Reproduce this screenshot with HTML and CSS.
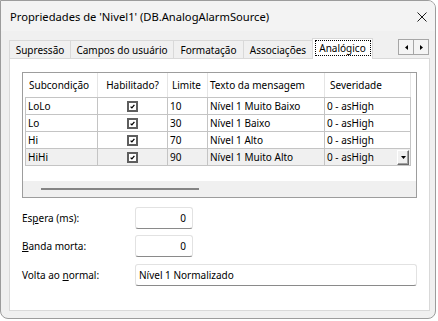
FILE: index.html
```html
<!DOCTYPE html>
<html lang="pt">
<head>
<meta charset="utf-8">
<title>Propriedades</title>
<link rel="stylesheet" href="styles.css">
</head>
<body>
<div class="window">
  <div class="titlebar">
    <span class="title">Propriedades de 'Nivel1' (DB.AnalogAlarmSource)</span>
    <svg class="close" width="10" height="10" viewBox="0 0 10 10"><path d="M0.5 0.5L9.5 9.5M9.5 0.5L0.5 9.5" stroke="#1b1b1b" stroke-width="1" fill="none"/></svg>
  </div>
  <div class="client">
    <div class="tabstrip">
      <div class="tab t1">Supressão</div>
      <div class="tab t2">Campos do usuário</div>
      <div class="tab t3">Formatação</div>
      <div class="tab t4">Associações</div>
      <div class="tab t5 active"><span class="focus">Analógico</span></div>
      <div class="spin">
        <div class="spinbtn"><svg width="3" height="5" viewBox="0 0 3 5"><path d="M3 0V5L0 2.5Z" fill="#000"/></svg></div>
        <div class="spinbtn"><svg width="3" height="5" viewBox="0 0 3 5"><path d="M0 0V5L3 2.5Z" fill="#000"/></svg></div>
      </div>
    </div>
    <div class="panel">
      <div class="grid">
        <div class="ghead">
          <div class="hc c1">Subcondição</div>
          <div class="hc c2">Habilitado?</div>
          <div class="hc c3">Limite</div>
          <div class="hc c4">Texto da mensagem</div>
          <div class="hc c5">Severidade</div>
        </div>
        <div class="gbody">
          <div class="grow">
            <div class="cell">LoLo</div>
            <div class="cell chk"><svg width="11" height="11" viewBox="0 0 11 11"><rect x="1" y="1" width="9" height="9" fill="#fff" stroke="#5e5e5e" stroke-width="2"/><path d="M3.6 5.6L4.9 6.9L7.4 3.9" stroke="#000" stroke-width="1.3" fill="none"/></svg></div>
            <div class="cell">10</div>
            <div class="cell">Nível 1 Muito Baixo</div>
            <div class="cell">0 - asHigh</div>
          </div>
          <div class="grow">
            <div class="cell">Lo</div>
            <div class="cell chk"><svg width="11" height="11" viewBox="0 0 11 11"><rect x="1" y="1" width="9" height="9" fill="#fff" stroke="#5e5e5e" stroke-width="2"/><path d="M3.6 5.6L4.9 6.9L7.4 3.9" stroke="#000" stroke-width="1.3" fill="none"/></svg></div>
            <div class="cell">30</div>
            <div class="cell">Nível 1 Baixo</div>
            <div class="cell">0 - asHigh</div>
          </div>
          <div class="grow">
            <div class="cell">Hi</div>
            <div class="cell chk"><svg width="11" height="11" viewBox="0 0 11 11"><rect x="1" y="1" width="9" height="9" fill="#fff" stroke="#5e5e5e" stroke-width="2"/><path d="M3.6 5.6L4.9 6.9L7.4 3.9" stroke="#000" stroke-width="1.3" fill="none"/></svg></div>
            <div class="cell">70</div>
            <div class="cell">Nível 1 Alto</div>
            <div class="cell">0 - asHigh</div>
          </div>
          <div class="grow current">
            <div class="cell">HiHi</div>
            <div class="cell chk"><svg width="11" height="11" viewBox="0 0 11 11"><rect x="1" y="1" width="9" height="9" fill="#fff" stroke="#5e5e5e" stroke-width="2"/><path d="M3.6 5.6L4.9 6.9L7.4 3.9" stroke="#000" stroke-width="1.3" fill="none"/></svg></div>
            <div class="cell">90</div>
            <div class="cell">Nível 1 Muito Alto</div>
            <div class="cell combo"><span>0 - asHigh</span><span class="dropbtn"><svg width="5" height="3" viewBox="0 0 5 3"><path d="M0 0H5L2.5 3Z" fill="#000"/></svg></span></div>
          </div>
        </div>
        <div class="hscroll"><div class="thumb"></div></div>
      </div>
      <div class="form">
        <div class="frow r1">
          <label class="lbl">Es<u>p</u>era (ms):</label>
          <div class="field num">0</div>
        </div>
        <div class="frow r2">
          <label class="lbl"><u>B</u>anda morta:</label>
          <div class="field num">0</div>
        </div>
        <div class="frow r3">
          <label class="lbl">Volta ao <u>n</u>ormal:</label>
          <div class="field wide">Nível 1 Normalizado</div>
        </div>
      </div>
    </div>
  </div>
</div>
</body>
</html>
```

FILE: styles.css
```css
* { box-sizing: border-box; }
html, body { margin: 0; padding: 0; }
body {
  width: 438px;
  height: 321px;
  overflow: hidden;
  background: #ffffff;
  font-family: "Noto Sans", "Open Sans", sans-serif;
  font-size: 10px;
  color: #000;
}
.window {
  width: 436px;
  height: 319px;
  border: 1px solid #9c9c9c;
  border-radius: 0 8px 8px 8px;
  background: #f0f0f0;
  overflow: hidden;
  display: flex;
  flex-direction: column;
}
.titlebar {
  height: 30px;
  flex: none;
  display: flex;
  align-items: center;
  padding-left: 9px;
  background: #f3f3f3;
}
.title { font-size: 11.2px; color: #000; }
.close { margin-left: auto; margin-right: 8px; margin-top: 1px; }
.client {
  flex: 1;
  padding: 7px 5px 0 8px;
}
.tabstrip {
  height: 20px;
  display: flex;
  align-items: flex-start;
}
.tab {
  margin-top: 2px;
  height: 18px;
  border: 1px solid #d9d9d9;
  border-bottom: none;
  display: flex;
  align-items: center;
  justify-content: center;
  background: #f0f0f0;
  margin-left: -1px;
  white-space: nowrap;
}
.t1 { width: 62px; margin-left: 0; }
.t2 { width: 104px; }
.t3 { width: 71px; }
.t4 { width: 70px; }
.t5 { width: 61px; }
.tab.active {
  margin-top: 0;
  height: 21px;
  background: #ffffff;
  position: relative;
  z-index: 1;
  padding-bottom: 3px;
}
.focus {
  display: flex;
  align-items: center;
  justify-content: center;
  width: 56px;
  height: 16px;
  outline: 1px dotted #000;
  outline-offset: -1px;
}
.spin {
  margin-left: auto;
  margin-right: 1px;
  margin-top: 1px;
  display: flex;
}
.spinbtn {
  width: 16px;
  height: 16px;
  border: 1px solid #a6a6a6;
  background: #f4f4f4;
  display: flex;
  align-items: center;
  justify-content: center;
}
.spinbtn + .spinbtn { margin-left: -1px; }
.panel {
  width: 421px;
  height: 253px;
  border: 1px solid #d9d9d9;
  background: #ffffff;
  padding: 13px 12px 0 12px;
}
.grid {
  width: 395px;
  height: 126px;
  border: 1px solid #9d9d9d;
  background: #fff;
  display: flex;
  flex-direction: column;
}
.ghead {
  height: 24px;
  flex: none;
  display: flex;
}
.hc {
  height: 24px;
  border-right: 1px solid #e5e5e5;
  display: flex;
  align-items: center;
  white-space: nowrap;
}
.hc.c1 { width: 75px; padding-left: 6px; }
.hc.c2 { width: 70px; justify-content: center; }
.hc.c3 { width: 40px; padding-left: 4px; }
.hc.c4 { width: 117px; padding-left: 2px; }
.hc.c5 { width: 86px; padding-left: 5px; }
.gbody {
  margin-left: 2px;
  width: 386px;
  border-left: 1px solid #c4c4c4;
  border-top: 1px solid #c4c4c4;
}
.grow {
  display: grid;
  grid-template-columns: 72px 70px 40px 117px 86px;
  height: 17px;
}
.grow.current { background: #f0f0f0; }
.cell {
  border-right: 1px solid #c4c4c4;
  border-bottom: 1px solid #c4c4c4;
  display: flex;
  align-items: center;
  padding-left: 2px;
  white-space: nowrap;
  overflow: hidden;
}
.cell.chk { justify-content: center; padding-left: 0; padding-top: 1px; }
.cell.combo { justify-content: space-between; }
.dropbtn {
  width: 12px;
  height: 15px;
  margin-right: 1px;
  background: #f0f0f0;
  border-top: 1px solid #ffffff;
  border-left: 1px solid #ffffff;
  border-right: 1px solid #6a6a6a;
  border-bottom: 1px solid #6a6a6a;
  box-shadow: inset -1px -1px 0 #a0a0a0;
  display: flex;
  align-items: center;
  justify-content: center;
}
.hscroll {
  margin-top: auto;
  height: 16px;
  flex: none;
  background: #f0f0f0;
  padding-top: 7px;
}
.thumb {
  margin-left: 18px;
  width: 158px;
  height: 2px;
  background: #858585;
}
.form { margin-top: 9px; }
.frow {
  display: flex;
  align-items: center;
  height: 22px;
}
.frow.r2 { margin-top: 6px; }
.frow.r3 { margin-top: 7px; }
.lbl { width: 113px; flex: none; }
.field {
  height: 22px;
  background: #ffffff;
  border: 1px solid #e2e2e2;
  border-bottom-color: #8a8a8a;
  border-radius: 3px;
  display: flex;
  align-items: center;
  white-space: nowrap;
}
.field.num { width: 58px; justify-content: flex-end; padding-right: 6px; }
.field.wide { width: 282px; padding-left: 3px; }
```
